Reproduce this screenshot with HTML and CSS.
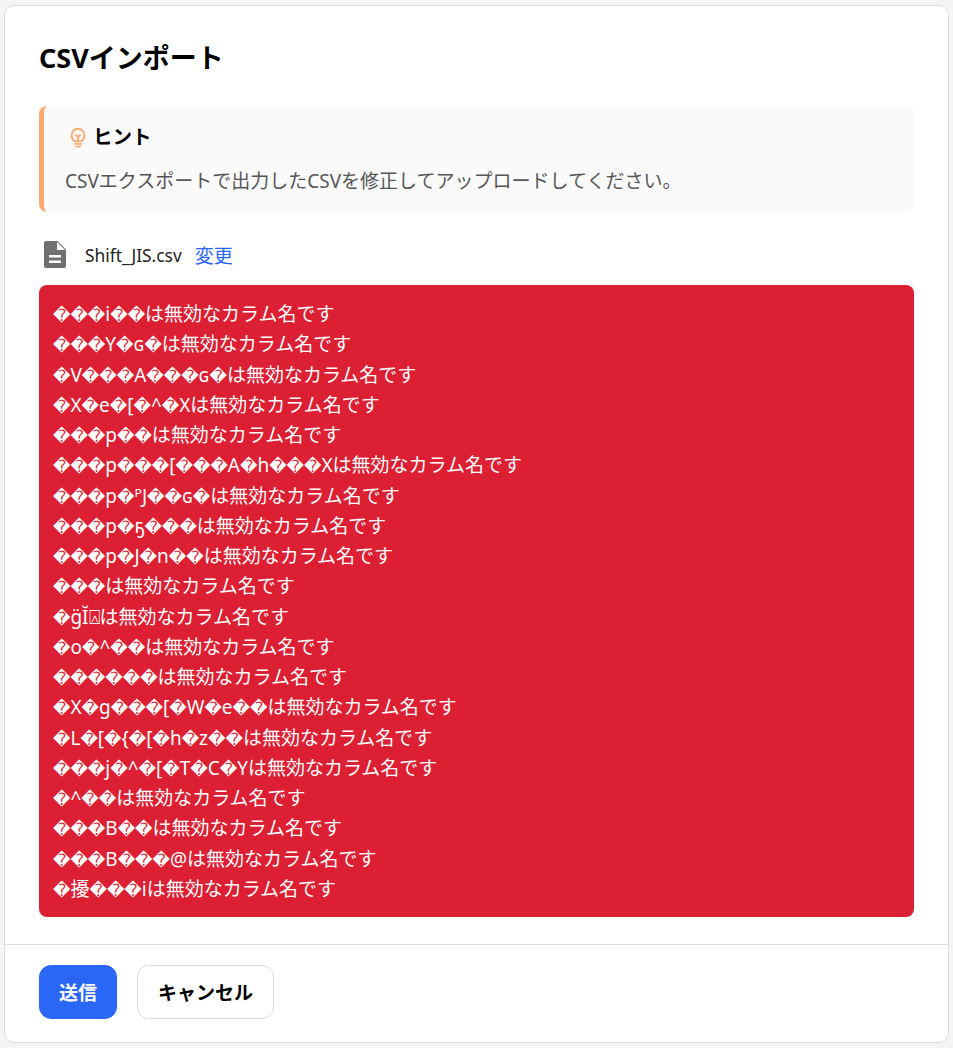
FILE: index.html
```html
<!DOCTYPE html>
<html lang="ja">
<head>
<meta charset="utf-8">
<title>CSVインポート</title>
<link rel="stylesheet" href="styles.css">
</head>
<body>
<div class="modal">
  <div class="content">
    <h2 class="title">CSVインポート</h2>
    <div class="hint">
      <div class="hint-head">
        <svg class="bulb" viewBox="0 0 24 24" width="22" height="22" fill="none" stroke="#ffa86f" stroke-width="2"><path d="M8 16.500C6 15 5 13 5 10a7 7 0 0 1 14 0c0 3-1 5-3 6.500z"/><path d="M9 9.500l3 2.500 3-2.500M12 12v4.500"/><path d="M8.500 19.500h7M10 22.500h4" stroke-linecap="round"/></svg>
        <span>ヒント</span>
      </div>
      <p class="hint-body">CSVエクスポートで出力したCSVを修正してアップロードしてください。</p>
    </div>
    <div class="file">
      <svg class="file-icon" viewBox="0 0 22 27" width="22" height="27"><path fill="#707070" d="M2 0h11.500L22 8.500V25a2 2 0 0 1-2 2H2a2 2 0 0 1-2-2V2a2 2 0 0 1 2-2z"/><path fill="#fff" d="M13 1v8h8zM5 14h12v2.500H5zM5 19.500h12V22H5z"/></svg>
      <span class="file-name">Shift_JIS.csv</span>
      <a class="change">変更</a>
    </div>
    <div class="errors">
      <div><span class="r">���</span>i<span class="r">��</span>は無効なカラム名です</div>
      <div><span class="r">���</span>Y<span class="r">�</span>ɢ<span class="r">�</span>は無効なカラム名です</div>
      <div><span class="r">�</span>V<span class="r">���</span>A<span class="r">���</span>ɢ<span class="r">�</span>は無効なカラム名です</div>
      <div><span class="r">�</span>X<span class="r">�</span>e<span class="r">�</span>[<span class="r">�</span>^<span class="r">�</span>Xは無効なカラム名です</div>
      <div><span class="r">���</span>p<span class="r">��</span>は無効なカラム名です</div>
      <div><span class="r">���</span>p<span class="r">���</span>[<span class="r">���</span>A<span class="r">�</span>h<span class="r">���</span>Xは無効なカラム名です</div>
      <div><span class="r">���</span>p<span class="r">�</span>ᴾJ<span class="r">��</span>ɢ<span class="r">�</span>は無効なカラム名です</div>
      <div><span class="r">���</span>p<span class="r">�</span>ҕ<span class="r">���</span>は無効なカラム名です</div>
      <div><span class="r">���</span>p<span class="r">�</span>J<span class="r">�</span>n<span class="r">��</span>は無効なカラム名です</div>
      <div><span class="r">���</span>は無効なカラム名です</div>
      <div><span class="r">�</span>g̈Ĭ⍓は無効なカラム名です</div>
      <div><span class="r">�</span>o<span class="r">�</span>^<span class="r">��</span>は無効なカラム名です</div>
      <div><span class="r">������</span>は無効なカラム名です</div>
      <div><span class="r">�</span>X<span class="r">�</span>g<span class="r">���</span>[<span class="r">�</span>W<span class="r">�</span>e<span class="r">��</span>は無効なカラム名です</div>
      <div><span class="r">�</span>L<span class="r">�</span>[<span class="r">�</span>{<span class="r">�</span>[<span class="r">�</span>h<span class="r">�</span>z<span class="r">��</span>は無効なカラム名です</div>
      <div><span class="r">���</span>j<span class="r">�</span>^<span class="r">�</span>[<span class="r">�</span>T<span class="r">�</span>C<span class="r">�</span>Yは無効なカラム名です</div>
      <div><span class="r">�</span>^<span class="r">��</span>は無効なカラム名です</div>
      <div><span class="r">���</span>B<span class="r">��</span>は無効なカラム名です</div>
      <div><span class="r">���</span>B<span class="r">���</span>@は無効なカラム名です</div>
      <div><span class="r">�</span>擾<span class="r">���</span>iは無効なカラム名です</div>
    </div>
  </div>
  <div class="footer">
    <button class="btn primary">送信</button>
    <button class="btn">キャンセル</button>
  </div>
</div>
</body>
</html>
```
FILE: styles.css
```css
html, body { margin: 0; height: 100%; }
body {
  background: #f5f5f5;
  font-family: "Noto Sans", "Noto Sans CJK JP", sans-serif;
  padding: 5px 4px;
  box-sizing: border-box;
  color: #000;
}
.modal {
  background: #fff;
  border: 1px solid #dcdcdc;
  border-radius: 10px;
  height: 1038px;
  box-sizing: border-box;
  display: flex;
  flex-direction: column;
}
.content { padding: 32px 34px 0; flex: 1; }
.title { margin: 0; font-size: 27px; line-height: 40px; font-weight: 700; }
.hint {
  margin-top: 28px;
  height: 106px;
  box-sizing: border-box;
  background: #fafafa;
  border-left: 5px solid #ffa86f;
  border-radius: 8px;
  padding: 17px 21px 0;
}
.hint-head { display: flex; align-items: center; gap: 4px; font-size: 19.500px; line-height: 28px; font-weight: 700; padding-left: 2px; }
.bulb { flex: none; }
.hint-body { margin: 16px 0 0; font-size: 19px; line-height: 28px; color: #555; }
.file { display: flex; align-items: center; margin-top: 29px; height: 27px; padding-left: 5px; }
.file-name { margin-left: 19px; font-size: 17.400px; color: #222; }
.change { margin-left: 13px; font-size: 19px; color: #2b67f6; }
.errors {
  margin-top: 17px;
  background: #dc1f33;
  color: #fff;
  border-radius: 8px;
  padding: 14px 14px 0;
  font-size: 19px;
  line-height: 30.250px;
  height: 632px;
  box-sizing: border-box;
  white-space: nowrap;
}
.errors div { height: 30.250px; }
.r { font-family: "DejaVu Sans", sans-serif; font-size: 17px; line-height: 0; }
.footer {
  border-top: 1px solid #dcdcdc;
  padding: 20px 34px 0;
  height: 98px;
  box-sizing: border-box;
  display: flex;
  gap: 20px;
  align-items: flex-start;
}
.btn {
  font-family: inherit;
  height: 54px;
  padding: 0 20px;
  font-size: 19px;
  font-weight: 700;
  background: #fff;
  color: #000;
  border: 1px solid #dcdcdc;
  border-radius: 12px;
}
.primary { background: #2b67f6; border-color: #2b67f6; color: #fff; padding: 0 19px; }
```
